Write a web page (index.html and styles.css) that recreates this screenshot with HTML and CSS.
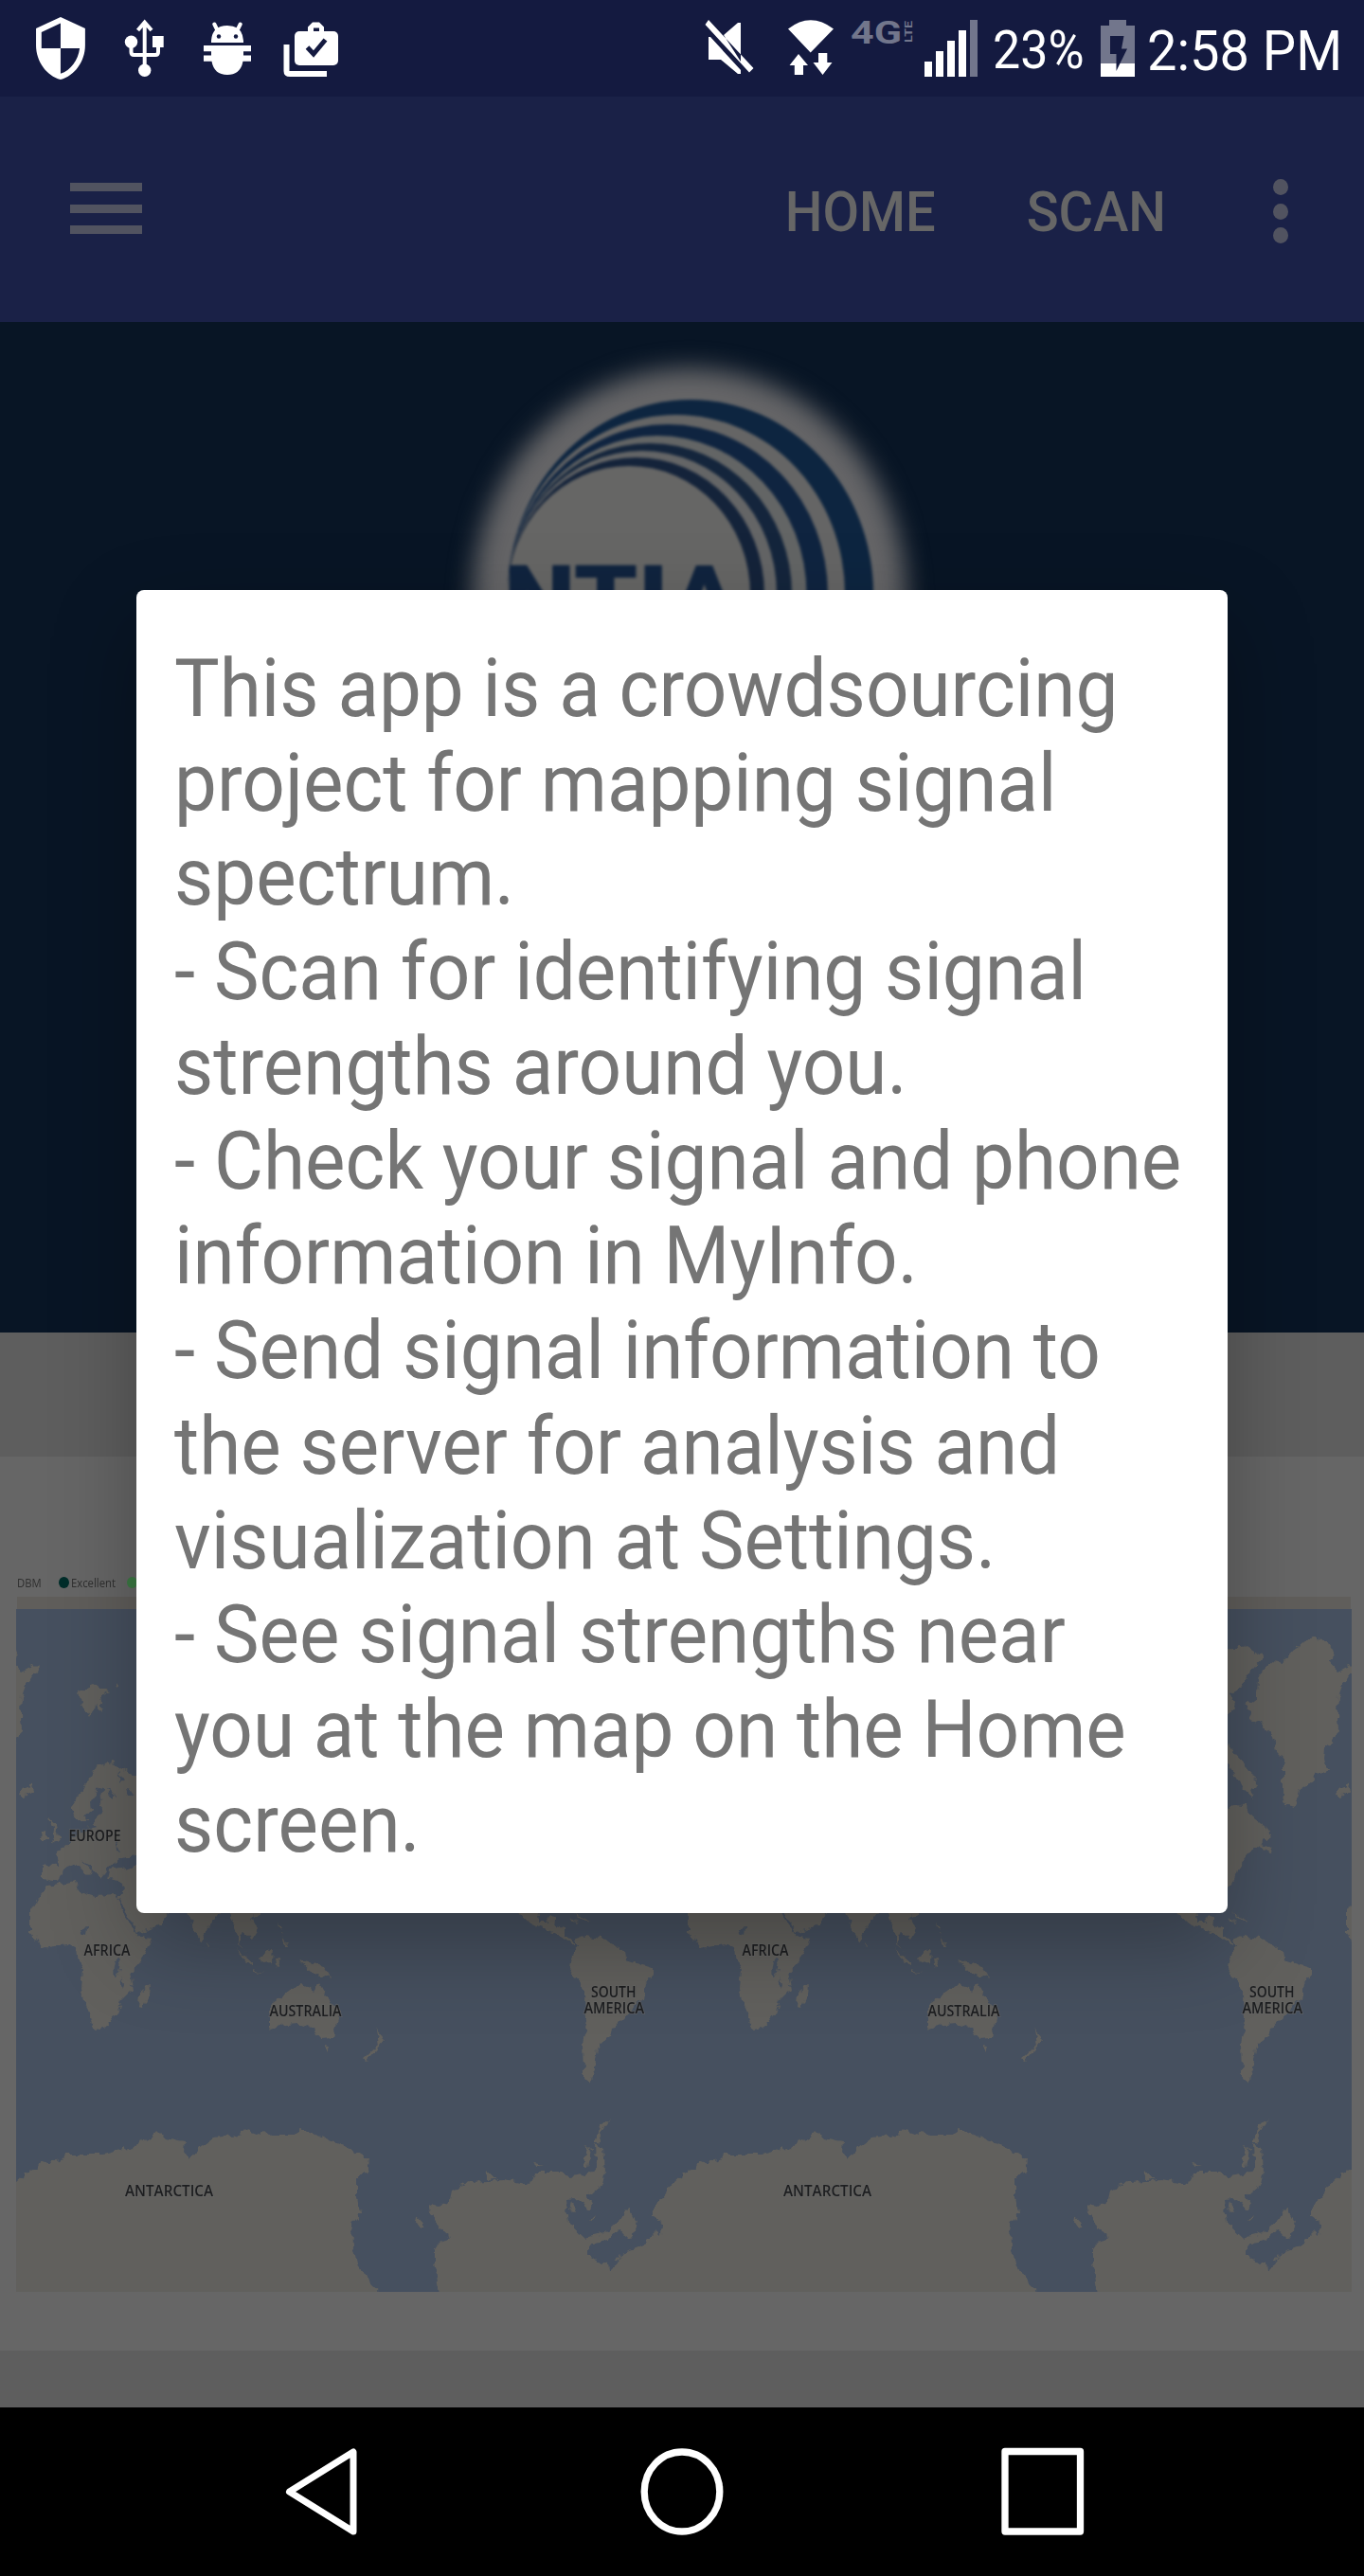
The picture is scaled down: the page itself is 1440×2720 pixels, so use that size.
FILE: index.html
```html
<!DOCTYPE html>
<html lang="en">
<head>
<meta charset="utf-8">
<title>Signal map</title>
<link rel="stylesheet" href="styles.css">
</head>
<body>
<div class="phone">
  <header class="status">
    <div class="status-left">
      <svg width="52" height="102" viewBox="0 0 52 102"><path transform="translate(-8.6 15) scale(2.88 3)" fill="#fff" d="M12 1L3 5v6c0 5.55 3.84 10.74 9 12 5.16-1.26 9-6.45 9-12V5l-9-4zm0 10.99h7c-.53 4.12-3.28 7.79-7 8.94V12H5V6.3l7-3.11v8.8z"/></svg>
      <svg width="42" height="102" viewBox="131 0 42 102" fill="none" stroke="#fff" stroke-width="4"><path d="M152.7 24V70M145.5 32L152.7 23.5 160 32M138.5 48V55Q138.5 58 141.5 58H164Q167 58 167 55V48"/><g fill="#fff" stroke="none"><circle cx="138.5" cy="44.3" r="6.7"/><circle cx="152.7" cy="74.3" r="6.7"/><path d="M161 38h11.7v12H161z"/></g></svg>
      <svg width="50" height="102" viewBox="215 0 50 102" fill="#fff"><path d="M223 45V43Q224 27 240 27T257 43V45zM215 48h50v6.300h-8v4.200h8v6.300h-8.500Q254 79 240 79T223.500 64.800H215v-6.300h8v-4.200h-8z"/><path d="M226.300 25.500L230 33M253.700 25.500L250 33" stroke="#fff" stroke-width="4" stroke-linecap="round"/><circle cx="231" cy="38.500" r="2.200" fill="#141a40"/><circle cx="249" cy="38.500" r="2.200" fill="#141a40"/></svg>
      <svg width="58" height="102" viewBox="299 0 58 102" fill="none"><path d="M302.500 47V75Q302.500 78 306 78H345" stroke="#fff" stroke-width="6"/><rect x="311" y="33" width="46" height="36" rx="5" fill="#fff"/><path d="M325 34V28.500L330 23.500H337L342 28.500V34H337V29.500H331V34z" fill="#fff"/><path d="M324.500 50L331 57 343.500 42" stroke="#141a40" stroke-width="5"/></svg>
    </div>
    <div class="status-right">
      <svg width="53" height="102" viewBox="743 0 53 102" fill="#fff"><path d="M748 21L744.500 26 791 76.500 795.500 72zM782 24V65L764 37 779 24zM748 39H750L782 74V78H779L761 63H748z"/></svg>
      <svg class="wifi" width="49" height="102" viewBox="831 0 49 102" fill="#fff"><path d="M832 30.500Q855.700 12 880 30.500L855.700 55.500zM843 57L833.500 69H838.800V79H848V69H853zM864 56H873.300V66H878.500L868.500 79 858.500 66H864z"/></svg>
      <svg class="lte" width="66" height="102" viewBox="898 0 66 102"><text class="lte-text" x="898" y="45.500" font-size="33" textLength="54" lengthAdjust="spacingAndGlyphs">4G</text><text class="lte-text" transform="translate(962.500 45) rotate(-90)" font-size="11.500" textLength="23" lengthAdjust="spacingAndGlyphs">LTE</text></svg>
      <svg class="bars" width="56" height="102" viewBox="976 0 56 102" fill="#fff"><path d="M976 65h8v16h-8zM988 54h8v27h-8zM1000 43h8v38h-8zM1012 32h8v49h-8z"/><path fill="#72768c" d="M1024 21h8v60h-8z"/></svg>
      <span class="percent">23%</span>
      <svg class="battery" width="36" height="102" viewBox="1162 0 36 102"><path fill="#72768c" d="M1171 21h18v6h9V67h-36V27h9z"/><path fill="#fff" d="M1162 67h36v14h-36z"/><path fill="#141a40" d="M1172 38H1186.500L1184 51.500H1190L1178.500 75V57H1172z"/></svg>
      <span class="clock">2:58 PM</span>
    </div>
  </header>

  <nav class="appbar">
    <div class="menu"><i></i><i></i><i></i></div>
    <span class="action home">HOME</span>
    <span class="action scan">SCAN</span>
    <div class="more"><i></i><i></i><i></i></div>
  </nav>

  <section class="hero">
    <svg width="520" height="300" viewBox="468 340 520 300">
      <defs><filter id="glow" x="-20%" y="-20%" width="140%" height="140%" color-interpolation-filters="sRGB"><feGaussianBlur stdDeviation="13"/></filter><filter id="soft" color-interpolation-filters="sRGB"><feGaussianBlur stdDeviation="1.6"/></filter></defs>
      <ellipse cx="728" cy="632" rx="229" ry="243" fill="#656567" filter="url(#glow)"/>
      <g filter="url(#soft)">
        <ellipse cx="729" cy="627" rx="193" ry="205" fill="#0d2540"/>
        <ellipse cx="714" cy="627" rx="178" ry="189" fill="#656565"/>
        <ellipse cx="705" cy="627" rx="169" ry="179" fill="#0f2440"/>
        <ellipse cx="694" cy="627" rx="157.500" ry="167" fill="#636565"/>
        <ellipse cx="686" cy="627" rx="150" ry="159" fill="#14253c"/>
        <ellipse cx="678" cy="627" rx="142" ry="151" fill="#646566"/>
        <ellipse cx="671.500" cy="627" rx="135.500" ry="144" fill="#14233a"/>
        <ellipse cx="664" cy="627" rx="128" ry="135" fill="#666665"/>
        <text class="ntia" x="532" y="668" textLength="248" lengthAdjust="spacingAndGlyphs">NTIA</text>
      </g>
    </svg>
  </section>

  <main class="page">
    <section class="card">
      <div class="legend"><span class="dbm">DBM</span><i class="dot excellent"></i><span class="label">Excellent</span><i class="dot good"></i></div>
      <div class="strip"></div>
      <svg class="map" width="1410" height="721" viewBox="17 1699 1410 721">
        <defs>
          <filter id="coast" filterUnits="userSpaceOnUse" x="-130" y="1690" width="860" height="740" color-interpolation-filters="sRGB"><feTurbulence type="fractalNoise" baseFrequency=".13" numOctaves="2" seed="4"/><feDisplacementMap in="SourceGraphic" scale="9" xChannelSelector="R" yChannelSelector="G"/></filter>
          <g id="world">
            <g filter="url(#coast)">
              <g fill="#61605d">
                <path d="M17 2305L28 2295 41 2288 44 2280 52 2284 62 2282 69 2275 110 2275 126 2271 129 2265 138 2272 142 2265 158 2258 166 2249 174 2257 195 2261 194 2272 200 2281 211 2267 225 2257 253 2254 257 2249 271 2254 279 2250 285 2255 308 2255 319 2248 340 2256 367 2268 390 2281 388 2294 377 2300 377 2320 380 2338 372 2348 373 2373 377 2390 390 2410 406 2425H10V2310z"/>
                <path d="M464 2425L459 2387V2375L464 2368 477 2364 468 2357 455 2340 452 2327 464 2330 475 2322 477 2313 496 2304 533 2302 560 2307 564 2293 592 2293 601 2298 624 2295 630 2287 629 2263 637 2267 639 2293 636 2305 620 2318 626 2330 620 2333 611 2322 597 2323 600 2347 617 2363 640 2357 656 2342 663 2330 672 2347 668 2360 659 2362 652 2354 640 2367 620 2370 620 2380 633 2388 643 2390 644 2397 656 2380 675 2373 693 2355 698 2360 699 2347 689 2340V2333L702 2317 714 2303V2425z"/>
                <path d="M604 2325L608 2334 602 2333zM622 2344L628 2338 625 2345zM441 2341L449 2350 444 2353 440 2347zM620 2266L624 2270 621 2288 617 2287zM628 2262L634 2246 644 2237 637 2247 631 2262zM512 2293L520 2296 526 2301 514 2300zM562 2284L574 2286 566 2288z"/>
                <path d="M608 2047L617 2044 640 2048 659 2060 660 2069 689 2078V2085L682 2093 679 2110 656 2132 646 2143 643 2152 633 2158 629 2173 628 2184 622 2200 616 2190 615 2157 620 2133 619 2107 602 2080 604 2063 611 2055z"/>
                <path d="M540 2010H567L570 2030 578 2030 580 2024 588 2025 586 2034 596 2036 596 2044 608 2051 606 2054 597 2049 588 2042 569 2035 558 2030zM582 2020L600 2026M604 2026L612 2030 603 2029z"/>
                <path d="M50 1992L80 1986 83 1997 100 2002 123 2001 133 2026 147 2045 160 2047 152 2065 137 2083 140 2101 128 2113 125 2124 113 2140 99 2143 92 2119 86 2101 88 2079 81 2067 80 2058 72 2053 45 2057 32 2040V2018L43 2000z"/>
                <path d="M75 1906L87 1890 100 1868 117 1860 140 1874 160 1880V2010L178 2020 167 2035 145 2041 137 2025 125 2004 131 1998 130 1987 114 1984 116 1975 144 1970 144 1958 130 1962 121 1968 113 1975 106 1984 96 1971 86 1963 97 1976 92 1981 80 1968 66 1974 62 1987 45 1984V1969L62 1970 60 1956 72 1947 83 1933 103 1929 95 1922 80 1922z"/>
                <path d="M52 1920L58 1925 63 1943 54 1946 57 1936zM44 1935L50 1934 50 1942 43 1942zM22 1889L34 1884 36 1890 26 1897 20 1894zM83 1786L103 1779 114 1785 106 1790 108 1808 101 1800 93 1813 86 1800zM123 1778L127 1780 124 1782z"/>
                <path d="M158 2096L156 2110 151 2121 147 2120 148 2103zM197 2015H234L223 2032 212 2050 204 2037zM217 2050L220 2054 218 2056zM239 2015H285L266 2025 272 2037 265 2048 256 2040 252 2053 262 2062 251 2053 250 2037zM248 2057L266 2072 266 2078zM267 2080L280 2083 268 2082zM273 2068L288 2056 287 2072 276 2073zM291 2068L297 2067 293 2079zM294 2030L298 2034 296 2042 305 2055 300 2054zM316 2070L342 2076 351 2089 330 2083z"/>
                <path d="M285 2117L301 2106 317 2094 326 2097 331 2103 337 2094 344 2107 358 2123 351 2152 340 2153 330 2142 317 2137 301 2138 285 2143zM341 2160L347 2161 345 2167zM397 2143L406 2153 395 2167 388 2176 383 2174 400 2158z"/>
                <g transform="translate(-1390)">
                  <path d="M1336 1761L1347 1751 1353 1758 1363 1744 1373 1736 1387 1729 1402 1734 1410 1747 1402 1754 1412 1765 1420 1761 1427 1758 1431 1762 1423 1774 1417 1779 1413 1790 1412 1811 1413 1826 1407 1840 1399 1845 1398 1858 1403 1869 1390 1874 1380 1885 1372 1890 1368 1908 1358 1906 1355 1897V1858L1348 1851 1343 1833 1330 1819 1317 1815 1322 1807 1313 1801 1327 1790 1328 1772z"/>
                  <path d="M1280 1745L1316 1738 1334 1750 1318 1768 1308 1785 1298 1788 1304 1802 1280 1830zM1285 1835L1300 1846 1316 1865 1328 1885 1320 1890 1325 1902 1312 1890 1296 1862zM1285 1920L1303 1905 1315 1906 1320 1918 1336 1930 1343 1940 1332 1946 1344 1952 1338 1956 1330 1947 1318 1958 1308 1970 1302 1985 1292 2000 1280 2000z"/>
                  <path d="M1300 2020L1318 2028 1308 2026z"/>
                </g>
              </g>
              <g fill="#46505f">
                <path d="M97 1909L96 1903 103 1888 110 1889 106 1903 108 1915 96 1928 90 1918zM113 1890L124 1896 120 1900zM125 1868L131 1880 128 1884zM85 2037L92 2036 91 2044 86 2042zM121 2070L127 2069 125 2083 119 2086zM127 2088L131 2095 129 2101zM133 1890L143 1893 135 1897zM122 1942L126 1955 123 1954z"/>
              </g>
            </g>
            <g class="place">
              <text x="72.500" y="1943.500" textLength="55" lengthAdjust="spacingAndGlyphs">EUROPE</text>
              <text x="88.500" y="2065" textLength="49" lengthAdjust="spacingAndGlyphs">AFRICA</text>
              <text x="284.500" y="2129" textLength="76" lengthAdjust="spacingAndGlyphs">AUSTRALIA</text>
              <text x="624" y="2108.500" textLength="47.500" lengthAdjust="spacingAndGlyphs">SOUTH</text>
              <text x="616.500" y="2126" textLength="63.500" lengthAdjust="spacingAndGlyphs">AMERICA</text>
              <text x="132" y="2319" textLength="93" lengthAdjust="spacingAndGlyphs">ANTARCTICA</text>
            </g>
          </g>
        </defs>
        <path fill="#46505f" d="M17 1699h1410v721H17z"/>
        <use href="#world"/><use href="#world" x="695"/><use href="#world" x="1390"/>
      </svg>
    </section>
  </main>

  <footer class="navbar">
    <svg width="78" height="96" viewBox="300 2583 78 96"><path d="M373 2589V2673L305.500 2631z" fill="none" stroke="#fff" stroke-width="7" stroke-linejoin="round"/></svg>
    <svg width="88" height="96" viewBox="676.500 2583 88 96"><ellipse cx="720.500" cy="2631" rx="39.800" ry="42" fill="none" stroke="#fff" stroke-width="7.300"/></svg>
    <svg width="88" height="96" viewBox="1057.500 2583 88 96"><rect x="1061.500" y="2588.500" width="79.500" height="84.500" fill="none" stroke="#fff" stroke-width="7.300" stroke-linejoin="round"/></svg>
  </footer>

  <div class="dialog">
    <p>This app is a crowdsourcing<br>project for mapping signal<br>spectrum.<br>- Scan for identifying signal<br>strengths around you.<br>- Check your signal and phone<br>information in MyInfo.<br>- Send signal information to<br>the server for analysis and<br>visualization at Settings.<br>- See signal strengths near<br>you at the map on the Home<br>screen.</p>
  </div>
</div>
</body>
</html>
```
FILE: styles.css
```css
* { box-sizing: border-box; }
body { margin: 0; background: #000; font-family: Roboto, sans-serif; }
svg { display: block; flex: none; }
.phone { position: relative; width: 1440px; height: 2720px; display: flex; flex-direction: column; overflow: hidden; }

.status { height: 102px; background: #141a40; display: flex; justify-content: space-between; color: #fff; }
.status-left { display: flex; padding-left: 38px; gap: 41px; }
.status-left svg:nth-child(3) { margin-left: 1px; }
.status-left svg:nth-child(4) { margin-left: -7px; }
.status-right { display: flex; width: 697px; }
.wifi { margin-left: 35px; }
.lte { margin-left: 18px; }
.lte-text { font-family: Roboto, sans-serif; font-weight: 700; fill: #72768c; }
.bars { margin-left: 12px; }
.percent, .clock { line-height: 108px; height: 108px; white-space: nowrap; transform: scaleY(1.0625); }
.percent { font-size: 52px; width: 114px; margin-left: 16px; }
.clock { font-size: 56px; margin-left: 13px; }

.appbar { height: 238px; background: #1a2147; display: flex; align-items: center; padding: 0 80px 0 74px; }
.menu { width: 76px; height: 54px; display: flex; flex-direction: column; justify-content: space-between; margin: 0 auto 2px 0; }
.menu i { height: 9px; background: #515360; }
.action { font-size: 56px; font-weight: 500; color: #666; transform: scaleY(1.0625); line-height: 66px; margin-top: 6px; }
.home { margin-right: 96px; }
.scan { margin-right: 113px; }
.more { width: 16px; height: 68px; display: flex; flex-direction: column; justify-content: space-between; margin-top: 4px; }
.more i { height: 17px; border-radius: 50%; background: #515360; }

.hero { height: 1067px; background: #081525; padding-left: 468px; }
.ntia { font: 900 101px Roboto, sans-serif; fill: #10243f; }

.page { height: 1135px; background: #5e5e5e; padding: 131px 0 60px; }
.card { height: 944px; background: #666; padding: 120px 13px 0 17px; }
.legend { height: 28px; padding-bottom: 2px; display: flex; align-items: center; font: 11.300px "Open Sans", "Noto Sans", sans-serif; color: #2f2f2f; line-height: 20px; }
.dbm { width: 45px; padding-left: 1px; transform: scaleY(1.17); }
.dot { width: 11px; height: 12px; border-radius: 50%; flex: none; }
.excellent { background: #002d2a; }
.good { background: #3c7a44; }
.label { width: 61px; padding-left: 2px; transform: scaleY(1.17); }
.strip { height: 13px; margin: 0 1px; background: #605e5b; }
.place { font: 600 16px "Open Sans", "Noto Sans", sans-serif; fill: #1d1e20; stroke: #666; stroke-width: 2px; stroke-opacity: .5; paint-order: stroke; }

.navbar { height: 178px; background: #000; display: flex; align-items: center; padding-left: 300px; }
.navbar svg:nth-child(2) { margin-left: 297.500px; }
.navbar svg:nth-child(3) { margin-left: 293px; }

.dialog { position: absolute; left: 144px; top: 622.500px; width: 1152px; height: 1397px; border-radius: 8px; background: #fff; box-shadow: 0 34px 90px rgba(0, 0, 0, .28); padding: 54px 40px; }
.dialog p { margin: 0; font-size: 80px; line-height: 94.060px; color: #757575; white-space: nowrap; transform: scaleY(1.0625); transform-origin: 0 0; }
```
